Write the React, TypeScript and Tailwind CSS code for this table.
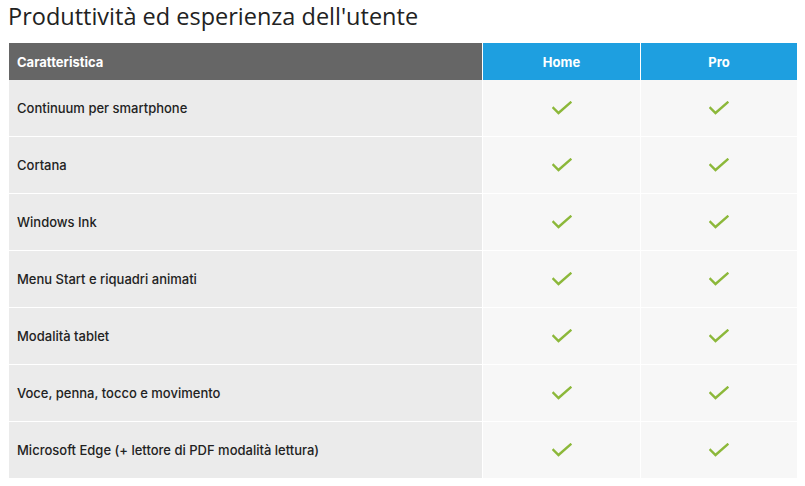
import React from 'react';

const rows = [
  'Continuum per smartphone',
  'Cortana',
  'Windows Ink',
  'Menu Start e riquadri animati',
  'Modalità tablet',
  'Voce, penna, tocco e movimento',
  'Microsoft Edge (+ lettore di PDF modalità lettura)',
];

const Check: React.FC = () => (
  <svg width="20" height="14" viewBox="0 0 20 14" fill="none">
    <path d="M1.5 7l5 5L18.5 1.5" stroke="#8cb83a" strokeWidth="2.4" strokeLinecap="square" />
  </svg>
);

export default function App() {
  return (
    <div className="w-[805px] h-[486px] bg-white font-['Inter',sans-serif] overflow-hidden">
      <h1 className="pl-[8px] pt-[1px] h-[43px] text-[23.5px] leading-[30px] text-[#222] font-['Open_Sans',sans-serif] font-normal">
        Produttività ed esperienza dell'utente
      </h1>
      <div className="ml-[9px] w-[788px] grid grid-cols-[473px_157px_156px] gap-x-px">
        <div className="h-[37px] pt-[2px] bg-[#666666] text-white text-[13px] font-bold flex items-center pl-2">Caratteristica</div>
        <div className="h-[37px] pt-[2px] bg-[#1e9fe0] text-white text-[13px] font-bold flex items-center justify-center">Home</div>
        <div className="h-[37px] pt-[2px] bg-[#1e9fe0] text-white text-[13px] font-bold flex items-center justify-center">Pro</div>
        {rows.map((r) => (
          <React.Fragment key={r}>
            <div className="h-[57px] pt-[2px] bg-[#ebebeb] border-b border-white text-[13px] font-medium text-[#222] flex items-center pl-2">{r}</div>
            <div className="h-[57px] bg-[#f7f7f7] border-b border-white flex items-center justify-center"><Check /></div>
            <div className="h-[57px] bg-[#f7f7f7] border-b border-white flex items-center justify-center"><Check /></div>
          </React.Fragment>
        ))}
      </div>
    </div>
  );
}
